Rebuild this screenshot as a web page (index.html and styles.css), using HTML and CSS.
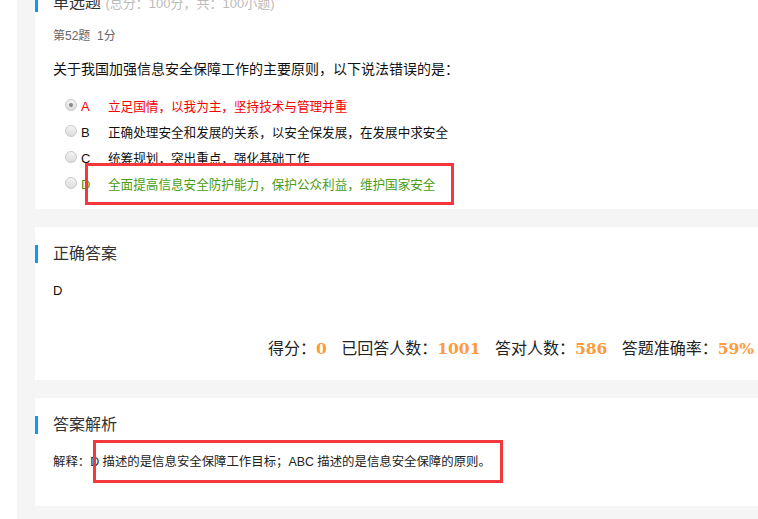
FILE: index.html
```html
<!DOCTYPE html>
<html lang="zh-CN">
<head>
<meta charset="utf-8">
<title>单选题</title>
<link rel="stylesheet" href="styles.css">
</head>
<body>
<div class="page">
  <div class="column">
    <section class="card card-question">
      <h2 class="title">单选题 <span class="sub">(总分：100分，共：100小题)</span></h2>
      <div class="qno">第52题&nbsp; 1分</div>
      <div class="qtext">关于我国加强信息安全保障工作的主要原则，以下说法错误的是：</div>
      <ul class="options">
        <li class="opt wrong"><span class="radio checked"></span><span class="letter">A</span><span class="otext">立足国情，以我为主，坚持技术与管理并重</span></li>
        <li class="opt"><span class="radio"></span><span class="letter">B</span><span class="otext">正确处理安全和发展的关系，以安全保发展，在发展中求安全</span></li>
        <li class="opt"><span class="radio"></span><span class="letter">C</span><span class="otext">统筹规划，突出重点，强化基础工作</span></li>
        <li class="opt right"><span class="radio"></span><span class="letter">D</span><span class="otext">全面提高信息安全防护能力，保护公众利益，维护国家安全</span></li>
      </ul>
      <div class="mark mark-1"></div>
    </section>

    <section class="card card-answer">
      <h2 class="title">正确答案</h2>
      <div class="answer">D</div>
      <div class="stats">
        <span class="label">得分：</span><span class="num">0</span>
        <span class="label">已回答人数：</span><span class="num">1001</span>
        <span class="label">答对人数：</span><span class="num">586</span>
        <span class="label">答题准确率：</span><span class="num">59%</span>
      </div>
    </section>

    <section class="card card-explain">
      <h2 class="title">答案解析</h2>
      <div class="explain">解释：D 描述的是信息安全保障工作目标；ABC 描述的是信息安全保障的原则。</div>
      <div class="mark mark-2"></div>
    </section>
  </div>
</div>
</body>
</html>
```

FILE: styles.css
```css
html, body {
  margin: 0;
  padding: 0;
  overflow: hidden;
  background: #fff;
}
body {
  font-family: "Liberation Sans", "Noto Sans CJK SC", sans-serif;
  color: #333;
}
.page {
  padding-left: 17px;
  margin-top: -24px;
  width: 900px;
}
.column {
  background: #f5f5f5;
  padding-left: 18px;
  display: flex;
  flex-direction: column;
  gap: 18px;
  padding-bottom: 40px;
}
.card {
  background: #fff;
  padding: 18px 0 0 18px;
  position: relative;
}
.title {
  margin: 0 0 0 -18px;
  padding-left: 15px;
  border-left: 3px solid #0a9af2;
  height: 18px;
  line-height: 18px;
  font-size: 16px;
  font-weight: normal;
  color: #333;
}
.sub {
  font-size: 13px;
  color: #bbb;
}
.qno {
  margin-top: 14px;
  line-height: 20px;
  font-size: 12px;
  color: #666;
}
.qtext {
  margin-top: 13px;
  line-height: 20px;
  font-size: 14px;
  color: #111;
}
.options {
  list-style: none;
  margin: 13px 0 0 0;
  padding: 0 0 13px 12px;
}
.opt {
  display: flex;
  align-items: center;
  height: 26px;
  font-size: 12.6px;
  color: #111;
}
.radio {
  width: 10px;
  height: 10px;
  border-radius: 50%;
  border: 1px solid #c9c9c9;
  background: linear-gradient(#f3f3f3, #dcdcdc);
  margin-right: 4px;
  position: relative;
  flex: none;
}
.radio.checked::after {
  content: "";
  position: absolute;
  left: 3px;
  top: 3px;
  width: 4px;
  height: 4px;
  border-radius: 50%;
  background: #8a8a8a;
}
.letter {
  width: 27px;
  font-size: 13px;
  padding-top: 2px;
}
.wrong { color: #f40000; }
.right { color: #4a9c16; }
.mark {
  position: absolute;
  border: 3px solid #f5383b;
  box-sizing: border-box;
}
.mark-1 {
  left: 50px;
  top: 187px;
  width: 369px;
  height: 42px;
}
.answer {
  margin-top: 18px;
  line-height: 20px;
  font-size: 13px;
  color: #111;
}
.stats {
  margin: 36px 0 0 215px;
  padding-bottom: 19px;
  line-height: 24px;
  font-size: 16px;
  white-space: nowrap;
  color: #222;
}
.num {
  font-family: "DejaVu Serif", serif;
  font-weight: bold;
  font-size: 15.5px;
  color: #ff9a3c;
  margin-right: 10px;
}
.explain {
  margin-top: 18px;
  padding-bottom: 34px;
  line-height: 20px;
  font-size: 12.4px;
  color: #222;
}
.mark-2 {
  left: 58px;
  top: 42px;
  width: 410px;
  height: 43px;
}
```
